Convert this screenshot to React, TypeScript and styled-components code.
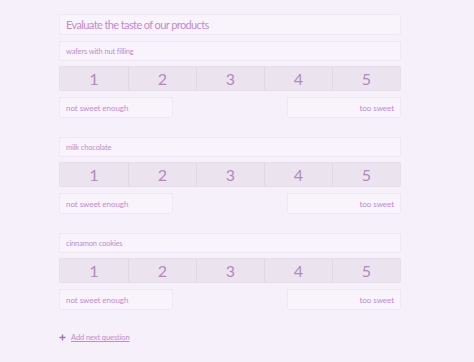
import styled, { createGlobalStyle } from "styled-components";

const GlobalStyle = createGlobalStyle`
    html, body {
        margin: 0;
        padding: 0;
        background-color: #f6f0fa;
        font-family: Lato, "Open Sans", sans-serif;
    }
`;

const colors = {
    text: "#c08bd0",
    numbers: "#b28ac2",
    boxBg: "#f9f4fb",
    boxBorder: "#efe7f3",
    barBg: "#ebe4ee",
    barLine: "#e0d8e4",
};

const products = ["wafers with nut filling", "milk chocolate", "cinnamon cookies"];

const Page = styled.div`
    width: 474px;
    height: 362px;
    box-sizing: border-box;
    padding: 14px 0 0 59px;
`;

const Form = styled.div`
    width: 342px;
    display: flex;
    flex-direction: column;
`;

const Field = styled.div<{ $height: number; $size: number; $spacing?: number; $align?: string }>`
    box-sizing: border-box;
    height: ${(p) => p.$height}px;
    display: flex;
    align-items: center;
    justify-content: ${(p) => p.$align || "flex-start"};
    padding: 0 6px;
    background-color: ${colors.boxBg};
    border: 1px solid ${colors.boxBorder};
    border-radius: 2px;
    color: ${colors.text};
    font-size: ${(p) => p.$size}px;
    letter-spacing: ${(p) => p.$spacing || 0}px;
`;

const Title = styled(Field)`
    margin-bottom: 6px;
`;

const Group = styled.div`
    display: flex;
    flex-direction: column;
    margin-bottom: 19px;
`;

const Scale = styled.div`
    display: grid;
    grid-template-columns: repeat(5, 1fr);
    height: 25px;
    margin: 5px 0 6px;
    background-color: ${colors.barBg};
    border: 1px solid #e6dfea;
    border-radius: 2px;
    box-sizing: border-box;
`;

const ScaleCell = styled.div`
    display: flex;
    align-items: center;
    justify-content: center;
    color: ${colors.numbers};
    font-size: 16px;
    border-left: 1px solid ${colors.barLine};
    &:first-child {
        border-left: none;
    }
`;

const Labels = styled.div`
    display: flex;
    justify-content: space-between;
`;

const Label = styled(Field)`
    width: 114px;
`;

const AddLink = styled.a`
    display: flex;
    align-items: center;
    gap: 5px;
    margin-top: 4px;
    color: ${colors.text};
    font-size: 7.5px;
    letter-spacing: -0.1px;
    cursor: pointer;

    span {
        text-decoration: underline;
    }
`;

const Plus = () => (
    <svg width="7" height="7" viewBox="0 0 7 7">
        <path d="M3.5 0.5v6M0.5 3.5h6" stroke="#a672b8" strokeWidth="1.4" />
    </svg>
);

const App = () => {
    return (
        <Page>
            <GlobalStyle />
            <Form>
                <Title $height={21} $size={11} $spacing={-0.6}>Evaluate the taste of our products</Title>
                {products.map((name) => (
                    <Group key={name}>
                        <Field $height={20} $size={7.5} $spacing={-0.15}>{name}</Field>
                        <Scale>
                            {[1, 2, 3, 4, 5].map((n) => (
                                <ScaleCell key={n}>{n}</ScaleCell>
                            ))}
                        </Scale>
                        <Labels>
                            <Label $height={21} $size={8} $spacing={-0.05}>not sweet enough</Label>
                            <Label $height={21} $size={8} $spacing={-0.05} $align="flex-end">too sweet</Label>
                        </Labels>
                    </Group>
                ))}
                <AddLink>
                    <Plus />
                    <span>Add next question</span>
                </AddLink>
            </Form>
        </Page>
    );
};

export default App;
